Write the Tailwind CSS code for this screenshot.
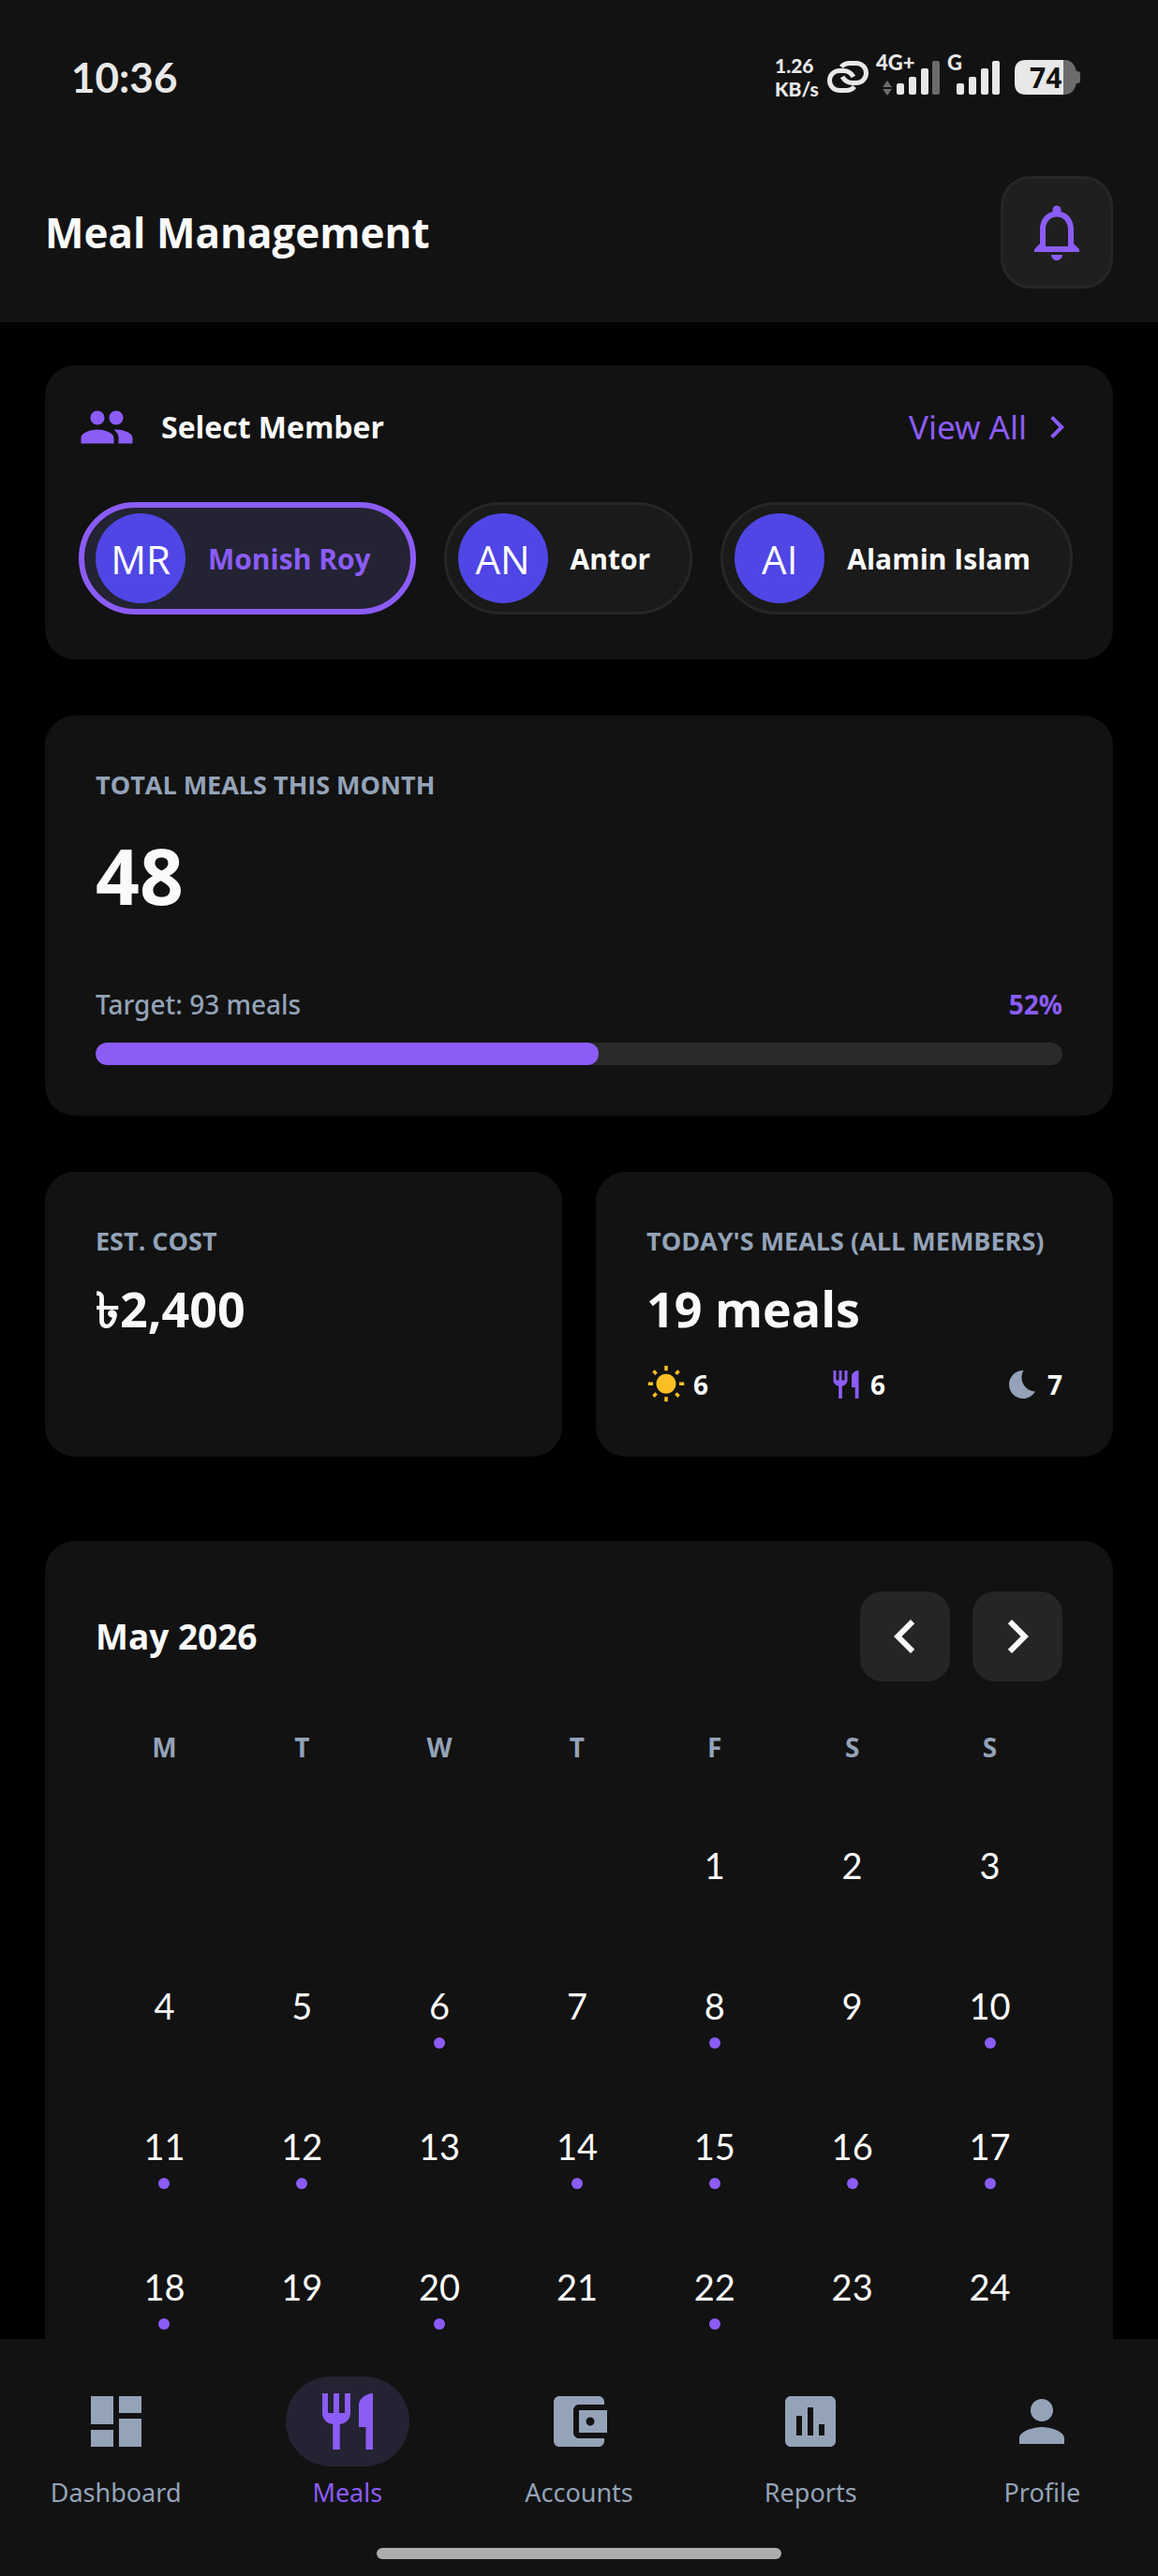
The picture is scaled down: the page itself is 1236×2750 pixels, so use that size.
<!DOCTYPE html>
<html lang="en">
<head>
    <meta charset="UTF-8">
    <meta name="viewport" content="width=device-width, initial-scale=1.0">
    <script src="https://cdn.jsdelivr.net/npm/@tailwindcss/browser@4"></script>
    <title>Meal Management</title>
</head>
<body class="flex flex-col h-screen bg-black text-[#fafafa] font-['Open_Sans','Noto_Sans',sans-serif]">

    <header class="bg-[#121212] shrink-0">
        <!-- Status bar -->
        <div class="flex items-center justify-between h-[164px] pl-[76px] pr-[83px] text-[#e8e8e8]">
            <p class="font-['Lato',sans-serif] font-bold text-[44px]">10:36</p>
            <div class="flex items-center">
                <p class="w-14 font-['Lato',sans-serif] font-black text-[21px] leading-[25px]">1.26<br>KB/s</p>
                <svg class="w-11 h-[34px]" viewBox="0 0 44 34" fill="none" stroke="currentColor" stroke-width="5">
                    <path d="M15 6.500Q18 2.500 24 2.500h7a10.500 10.500 0 0 1 0 21h-4q-7 0-11-6.500"/>
                    <path d="M29 27.500Q26 31.500 20 31.500h-7a10.500 10.500 0 0 1 0-21h4q7 0 11 6.500"/>
                </svg>
                <div class="relative ml-2 w-[68px] h-[42px]">
                    <span class="absolute left-0 -top-1 font-['Lato',sans-serif] font-black text-[22px] leading-5">4G+</span>
                    <svg class="w-full h-full" viewBox="0 0 68 42" fill="currentColor">
                        <path fill="#6b6b6b" d="M7 32l5-7 5 7zM7 34l5 7 5-7z"/>
                        <rect x="22" y="28" width="8" height="12" rx="2"/>
                        <rect x="35" y="21" width="8" height="19" rx="2"/>
                        <rect x="48" y="12" width="8" height="28" rx="2"/>
                        <rect x="60" y="4" width="8" height="36" rx="2" fill="#6b6b6b"/>
                    </svg>
                </div>
                <div class="relative ml-2 w-[56px] h-[42px]">
                    <span class="absolute left-0 -top-1 font-['Lato',sans-serif] font-black text-[22px] leading-5">G</span>
                    <svg class="w-full h-full" viewBox="0 0 56 42" fill="currentColor">
                        <rect x="10" y="28" width="8" height="12" rx="2"/>
                        <rect x="23" y="21" width="8" height="19" rx="2"/>
                        <rect x="36" y="12" width="8" height="28" rx="2"/>
                        <rect x="48" y="4" width="8" height="36" rx="2"/>
                    </svg>
                </div>
                <!-- Battery -->
                <div class="relative ml-4 w-[70px] h-[37px]">
                    <svg class="w-full h-full" viewBox="0 0 70 37">
                        <path fill="#6b6b6b" d="M50 0h4q9 0 12 12h1q3 0 3 3v7q0 3-3 3h-1q-3 12-12 12h-4z"/>
                        <path fill="#e8e8e8" d="M12 0h40v37H12Q0 37 0 25V12Q0 0 12 0z"/>
                    </svg>
                    <span class="absolute inset-y-0 left-4 font-bold text-[30px] leading-[37px] text-[#121212]">74</span>
                </div>
            </div>
        </div>

        <!-- Title -->
        <div class="flex items-center justify-between px-12 pt-6 pb-9">
            <h1 class="font-bold text-[44px] leading-[60px]">Meal Management</h1>
            <button type="button" aria-label="Notifications" class="flex items-center justify-center w-[120px] h-[120px] rounded-[32px] border-3 border-[#262626] bg-[#1f1f1f] text-[#8b5cf6]">
                <svg class="w-[72px] h-[72px]" viewBox="0 0 24 24" fill="currentColor"><path d="M12 22c1.100 0 2-.9 2-2h-4c0 1.100.9 2 2 2zm6-6v-5c0-3.070-1.630-5.640-4.500-6.320V4c0-.83-.67-1.500-1.500-1.500s-1.500.67-1.500 1.500v.68C7.640 5.360 6 7.920 6 11v5l-2 2v1h16v-1l-2-2zm-2 1H8v-6c0-2.480 1.510-4.500 4-4.500s4 2.020 4 4.500v6z"/></svg>
            </button>
        </div>
    </header>

    <main class="flex-1 min-h-0 overflow-y-auto [scrollbar-width:none] px-12 pt-[46px]">

        <!-- Members -->
        <section class="bg-[#121212] rounded-[32px] px-9 pt-9 pb-12">
            <div class="flex items-center h-[60px]">
                <svg class="w-[60px] h-[60px] text-[#8b5cf6]" viewBox="0 0 24 24" fill="currentColor"><path d="M16 11c1.660 0 2.990-1.340 2.990-3S17.660 5 16 5c-1.660 0-3 1.340-3 3s1.340 3 3 3zm-8 0c1.660 0 2.990-1.340 2.990-3S9.660 5 8 5C6.340 5 5 6.340 5 8s1.340 3 3 3zm0 2c-2.330 0-7 1.170-7 3.500V19h14v-2.500c0-2.330-4.670-3.500-7-3.500zm8 0c-.29 0-.62.02-.97.05 1.160.84 1.970 1.970 1.970 3.450V19h6v-2.500c0-2.330-4.670-3.500-7-3.500z"/></svg>
                <h2 class="ml-7 font-bold text-[32px]">Select Member</h2>
                <a href="#" class="ml-auto flex items-center gap-2 font-['Noto_Sans',sans-serif] text-[35px] text-[#8b5cf6]">
                    View All
                    <svg class="w-12 h-12" viewBox="0 0 24 24" fill="currentColor"><path d="M10 6L8.590 7.410 13.170 12l-4.580 4.590L10 18l6-6z"/></svg>
                </a>
            </div>
            <div class="flex gap-[30px] mt-[50px]">
                <button type="button" class="flex items-center gap-6 h-[120px] pl-3 pr-[42px] rounded-full border-6 border-[#8b5cf6] bg-[#232333] font-bold text-[30px] text-[#8b5cf6] whitespace-nowrap">
                    <span class="flex items-center justify-center w-24 h-24 rounded-full bg-[#4f46e5] font-normal text-[42px] text-white">MR</span>
                    Monish Roy
                </button>
                <button type="button" class="flex items-center gap-6 h-[120px] pl-3 pr-[42px] rounded-full border-3 border-[#262626] bg-[#1a1a1a] font-bold text-[30px] whitespace-nowrap">
                    <span class="flex items-center justify-center w-24 h-24 rounded-full bg-[#4f46e5] font-normal text-[42px] text-white">AN</span>
                    Antor
                </button>
                <button type="button" class="flex items-center gap-6 h-[120px] pl-3 pr-[42px] rounded-full border-3 border-[#262626] bg-[#1a1a1a] font-bold text-[30px] whitespace-nowrap">
                    <span class="flex items-center justify-center w-24 h-24 rounded-full bg-[#4f46e5] font-normal text-[42px] text-white">AI</span>
                    Alamin Islam
                </button>
            </div>
        </section>

        <!-- Total meals -->
        <section class="mt-[60px] bg-[#121212] rounded-[32px] p-[54px]">
            <h2 class="font-bold text-[27px] leading-10 text-[#94a3b8]">TOTAL MEALS THIS MONTH</h2>
            <p class="mt-4 font-bold text-[82px] leading-[120px]">48</p>
            <div class="flex justify-between mt-[58px] text-[28px] leading-10">
                <span class="font-['Noto_Sans',sans-serif] font-medium text-[#94a3b8]">Target: 93 meals</span>
                <span class="font-bold text-[#8b5cf6]">52%</span>
            </div>
            <div role="progressbar" aria-valuenow="52" aria-valuemin="0" aria-valuemax="100" class="mt-[21px] h-6 rounded-full bg-[#2a2a2a] overflow-hidden">
                <div class="h-full rounded-full bg-[#8b5cf6]" style="width: 52%"></div>
            </div>
        </section>

        <!-- Cost and today's meals -->
        <div class="grid grid-cols-2 gap-9 mt-[60px]">
            <section class="bg-[#121212] rounded-[32px] p-[54px]">
                <h2 class="font-bold text-[27px] leading-10 text-[#94a3b8]">EST. COST</h2>
                <p class="mt-4 font-bold text-[52px] leading-[72px]">৳2,400</p>
            </section>
            <section class="bg-[#121212] rounded-[32px] p-[54px]">
                <h2 class="font-bold text-[27px] leading-10 text-[#94a3b8] whitespace-nowrap">TODAY'S MEALS (ALL MEMBERS)</h2>
                <p class="mt-4 font-bold text-[52px] leading-[72px]">19 meals</p>
                <div class="flex items-center justify-between mt-6 mb-0.5 h-[42px] font-bold text-[28px]">
                    <span class="flex items-center gap-2">
                        <svg class="w-[42px] h-[42px]" viewBox="0 0 24 24" fill="#fbbf24"><path d="M6.760 4.840l-1.800-1.790-1.410 1.410 1.790 1.790 1.420-1.410zM4 10.500H1v2h3v-2zm9-9.950h-2V3.500h2V.55zm7.450 3.910l-1.410-1.410-1.790 1.790 1.410 1.410 1.790-1.790zm-3.210 13.700l1.790 1.800 1.410-1.410-1.800-1.790-1.400 1.400zM20 10.500v2h3v-2h-3zm-8-5c-3.310 0-6 2.690-6 6s2.690 6 6 6 6-2.690 6-6-2.690-6-6-6zm-1 16.950h2V19.500h-2v2.950zm-7.450-3.910l1.410 1.410 1.790-1.800-1.410-1.410-1.790 1.800z"/></svg>
                        6
                    </span>
                    <span class="flex items-center gap-2">
                        <svg class="w-9 h-9" viewBox="0 0 24 24" fill="#8b5cf6"><path d="M11 9H9V2H7v7H5V2H3v7c0 2.120 1.660 3.840 3.750 3.970V22h2.500v-9.030C11.340 12.840 13 11.120 13 9V2h-2v7zm5-3v8h2.500v8H21V2c-2.760 0-5 2.240-5 4z"/></svg>
                        6
                    </span>
                    <span class="flex items-center gap-2">
                        <svg class="w-9 h-9" viewBox="0 0 24 24" fill="#94a3b8"><path d="M12.340 2.020C6.590 1.820 2 6.420 2 12c0 5.520 4.480 10 10 10 3.710 0 6.930-2.020 8.660-5.020-7.510-.25-12.090-8.430-8.320-14.960z"/></svg>
                        7
                    </span>
                </div>
            </section>
        </div>

        <!-- Calendar -->
        <section class="mt-[90px] bg-[#121212] rounded-t-[32px] p-[54px] pb-0">
            <div class="flex items-center gap-6">
                <h2 class="mr-auto font-bold text-[37px]">May 2026</h2>
                <button type="button" aria-label="Previous month" class="flex items-center justify-center w-24 h-24 rounded-3xl bg-[#252525]">
                    <svg class="w-[72px] h-[72px]" viewBox="0 0 24 24" fill="currentColor"><path d="M15.410 7.410L14 6l-6 6 6 6 1.410-1.410L10.830 12z"/></svg>
                </button>
                <button type="button" aria-label="Next month" class="flex items-center justify-center w-24 h-24 rounded-3xl bg-[#252525]">
                    <svg class="w-[72px] h-[72px]" viewBox="0 0 24 24" fill="currentColor"><path d="M10 6L8.590 7.410 13.170 12l-4.580 4.590L10 18l6-6z"/></svg>
                </button>
            </div>
            <div class="mt-[50px] pr-1">
                <table class="w-full table-fixed">
                    <thead>
                        <tr class="font-bold text-[28px] leading-10 text-[#94a3b8]">
                            <th class="pb-[42px]">M</th>
                            <th class="pb-[42px]">T</th>
                            <th class="pb-[42px]">W</th>
                            <th class="pb-[42px]">T</th>
                            <th class="pb-[42px]">F</th>
                            <th class="pb-[42px]">S</th>
                            <th class="pb-[42px]">S</th>
                        </tr>
                    </thead>
                    <tbody id="days"></tbody>
                </table>
            </div>
        </section>
    </main>

    <!-- Bottom navigation -->
    <footer class="shrink-0 bg-[#121212] pt-10 pb-[18px]">
        <nav class="grid grid-cols-5 font-['Noto_Sans',sans-serif] text-[27px] leading-9 text-[#94a3b8]">
            <a href="#" class="flex flex-col items-center gap-[10px]">
                <span class="flex items-center justify-center w-[132px] h-24">
                    <svg class="w-[72px] h-[72px]" viewBox="0 0 24 24" fill="currentColor"><path d="M3 13h8V3H3v10zm0 8h8v-6H3v6zm10 0h8V11h-8v10zm0-18v6h8V3h-8z"/></svg>
                </span>
                Dashboard
            </a>
            <a href="#" aria-current="page" class="flex flex-col items-center gap-[10px] text-[#8b5cf6]">
                <span class="flex items-center justify-center w-[132px] h-24 rounded-full bg-[#232333]">
                    <svg class="w-[72px] h-[72px]" viewBox="0 0 24 24" fill="currentColor"><path d="M11 9H9V2H7v7H5V2H3v7c0 2.120 1.660 3.840 3.750 3.970V22h2.500v-9.030C11.340 12.840 13 11.120 13 9V2h-2v7zm5-3v8h2.500v8H21V2c-2.760 0-5 2.240-5 4z"/></svg>
                </span>
                Meals
            </a>
            <a href="#" class="flex flex-col items-center gap-[10px]">
                <span class="flex items-center justify-center w-[132px] h-24">
                    <svg class="w-[72px] h-[72px]" viewBox="0 0 24 24" fill="currentColor"><path d="M21 18v1c0 1.100-.9 2-2 2H5c-1.110 0-2-.9-2-2V5c0-1.100.89-2 2-2h14c1.100 0 2 .9 2 2v1h-9c-1.110 0-2 .9-2 2v8c0 1.100.89 2 2 2h9zm-9-2h10V8H12v8zm4-2.500c-.83 0-1.500-.67-1.500-1.500s.67-1.500 1.500-1.500 1.500.67 1.500 1.500-.67 1.500-1.500 1.500z"/></svg>
                </span>
                Accounts
            </a>
            <a href="#" class="flex flex-col items-center gap-[10px]">
                <span class="flex items-center justify-center w-[132px] h-24">
                    <svg class="w-[72px] h-[72px]" viewBox="0 0 24 24" fill="currentColor"><path d="M19 3H5c-1.100 0-2 .9-2 2v14c0 1.100.9 2 2 2h14c1.100 0 2-.9 2-2V5c0-1.100-.9-2-2-2zM9 17H7v-7h2v7zm4 0h-2V7h2v10zm4 0h-2v-4h2v4z"/></svg>
                </span>
                Reports
            </a>
            <a href="#" class="flex flex-col items-center gap-[10px]">
                <span class="flex items-center justify-center w-[132px] h-24">
                    <svg class="w-[72px] h-[72px]" viewBox="0 0 24 24" fill="currentColor"><path d="M12 12c2.210 0 4-1.790 4-4s-1.790-4-4-4-4 1.790-4 4 1.790 4 4 4zm0 2c-2.670 0-8 1.340-8 4v2h16v-2c0-2.660-5.330-4-8-4z"/></svg>
                </span>
                Profile
            </a>
        </nav>
        <div class="mx-auto mt-[41px] w-[35%] h-3 rounded-full bg-[#adadad]"></div>
    </footer>

    <script>
        // days that have at least one meal
        const mealDays = [6, 8, 10, 11, 12, 14, 15, 16, 17, 18, 20, 22];
        const firstColumn = 4;
        const body = document.getElementById('days');

        for (let week = 0; week < 4; week++) {
            const row = body.insertRow();
            for (let col = 0; col < 7; col++) {
                const cell = row.insertCell();
                const day = week * 7 + col - firstColumn + 1;
                if (day < 1) continue;
                const dot = mealDays.includes(day) ? 'w-3 h-3 rounded-full bg-[#8b5cf6]' : 'w-3 h-3';
                cell.innerHTML = `<button type="button" class="flex flex-col items-center justify-center gap-[10px] w-full h-[150px] font-['Lato',sans-serif] text-[38px] leading-[48px]">${day}<span class="${dot}"></span></button>`;
            }
        }
    </script>
</body>
</html>
